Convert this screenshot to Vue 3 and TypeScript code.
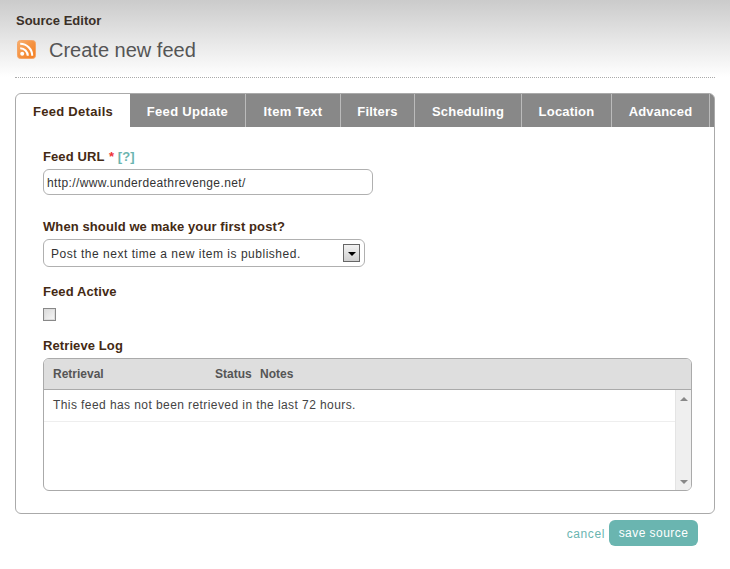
<script setup lang="ts">
interface Tab { label: string; width: number }
const tabs: Tab[] = [
  { label: 'Feed Details', width: 114 },
  { label: 'Feed Update', width: 116 },
  { label: 'Item Text', width: 95 },
  { label: 'Filters', width: 74 },
  { label: 'Scheduling', width: 107 },
  { label: 'Location', width: 90 },
  { label: 'Advanced', width: 98 },
]
</script>

<template>
  <div class="page">
    <header class="head">
      <div class="crumb">Source Editor</div>
      <div class="title-row">
        <svg class="rss" width="19" height="19" viewBox="0 0 19 19" aria-hidden="true">
          <defs>
            <linearGradient id="rssbg" x1="0" y1="0" x2="1" y2="1">
              <stop offset="0" stop-color="#f8b070" />
              <stop offset="0.5" stop-color="#f59240" />
              <stop offset="1" stop-color="#f37f22" />
            </linearGradient>
          </defs>
          <rect x="0.5" y="0.5" width="18" height="18" rx="3" fill="url(#rssbg)" stroke="#f5a566" />
          <circle cx="5.2" cy="13.8" r="2" fill="#fff" />
          <path d="M3.2 8.2a7.6 7.6 0 0 1 7.6 7.6" fill="none" stroke="#fff" stroke-width="2.1" />
          <path d="M3.2 3.8a12 12 0 0 1 12 12" fill="none" stroke="#fff" stroke-width="2.1" />
        </svg>
        <h1 class="title">Create new feed</h1>
      </div>
    </header>
    <div class="rule"></div>

    <section class="panel">
      <nav class="tabs">
        <div
          v-for="(t, i) in tabs"
          :key="t.label"
          class="tab"
          :class="{ active: i === 0 }"
          :style="{ width: t.width + 'px' }"
        >{{ t.label }}</div>
        <div class="tab-rest"></div>
      </nav>
      <div class="body">
        <label class="lbl">Feed URL <span class="req">*</span> <a class="help">[?]</a></label>
        <input class="url" type="text" value="http://www.underdeathrevenge.net/" />

        <label class="lbl gap-l">When should we make your first post?</label>
        <div class="select">
          <span class="sel-text">Post the next time a new item is published.</span>
          <span class="sel-btn"><i class="sel-arrow"></i></span>
        </div>

        <label class="lbl gap-m">Feed Active</label>
        <input class="check" type="checkbox" />

        <label class="lbl gap-m">Retrieve Log</label>
        <div class="log">
          <div class="log-head">
            <span class="c-ret">Retrieval</span>
            <span class="c-stat">Status</span>
            <span>Notes</span>
          </div>
          <div class="log-body">
            <div class="log-rows">
              <div class="log-row">This feed has not been retrieved in the last 72 hours.</div>
            </div>
            <div class="scroll">
              <i class="up"></i>
              <i class="down"></i>
            </div>
          </div>
        </div>
      </div>
    </section>

    <footer class="foot">
      <a class="cancel">cancel</a>
      <button class="save" type="button">save source</button>
    </footer>
  </div>
</template>

<style>
html, body { margin: 0; background: #fff; }
</style>

<style scoped>
.page {
  width: 730px;
  height: 569px;
  overflow: hidden;
  font-family: "Liberation Sans", Arial, sans-serif;
  font-size: 12px;
  color: #333;
  background: #fff;
}
.head {
  height: 77px;
  box-sizing: border-box;
  padding: 13px 16px 0;
  background: linear-gradient(#cbcbcb, #ffffff);
}
.crumb {
  font-size: 13px;
  font-weight: bold;
  line-height: 16px;
  color: #3a3028;
}
.title-row {
  display: flex;
  align-items: center;
  margin-top: 11px;
  padding-left: 1px;
  height: 19px;
}
.rss { flex: none; }
.title {
  margin: 0 0 0 13px;
  font-size: 20px;
  font-weight: normal;
  line-height: 24px;
  color: #555;
}
.rule {
  margin: 0 15px;
  border-top: 1px dotted #aaa;
}
.panel {
  margin: 15px 15px 0;
  height: 421px;
  box-sizing: border-box;
  border: 1px solid #aaa;
  border-radius: 6px;
  overflow: hidden;
}
.tabs {
  display: flex;
  height: 33px;
  background: #888;
}
.tab {
  flex: none;
  box-sizing: border-box;
  height: 33px;
  border-right: 1px solid #bbb;
  text-align: center;
  line-height: 35px;
  font-size: 13px;
  font-weight: bold;
  letter-spacing: 0.2px;
  color: #fff;
  white-space: nowrap;
}
.tab:nth-child(-n+3) { letter-spacing: 0.3px; }
.tab.active {
  background: #fff;
  color: #442a14;
  border-right: 0;
}
.tab-rest { flex: 1; background: #888; }
.body {
  padding: 22px 22px 0 27px;
}
.lbl {
  display: block;
  font-size: 13px;
  font-weight: bold;
  line-height: 16px;
  letter-spacing: 0.1px;
  color: #442a14;
}
.gap-l { margin-top: 24px; }
.gap-m { margin-top: 17px; }
.req { color: #e33; margin-left: 1px; }
.help { color: #6ab5b0; }
.url {
  display: block;
  box-sizing: border-box;
  width: 330px;
  height: 26px;
  margin-top: 4px;
  padding: 1px 3px 0;
  border: 1px solid #b0b0b0;
  border-radius: 6px;
  font-family: inherit;
  font-size: 12px;
  letter-spacing: 0.38px;
  color: #333;
  outline: none;
}
.select {
  display: flex;
  align-items: center;
  justify-content: space-between;
  box-sizing: border-box;
  width: 322px;
  height: 28px;
  margin-top: 4px;
  padding: 0 4px 0 7px;
  border: 1px solid #b0b0b0;
  border-radius: 6px;
  font-size: 12px;
  letter-spacing: 0.52px;
  color: #333;
}
.sel-text { padding-top: 1px; }
.sel-btn {
  display: flex;
  align-items: center;
  justify-content: center;
  box-sizing: border-box;
  width: 17px;
  height: 18px;
  border: 1px solid #666;
  background: linear-gradient(#f2f2f2, #d0d0d0);
}
.sel-arrow {
  display: block;
  width: 0;
  height: 0;
  border-left: 4px solid transparent;
  border-right: 4px solid transparent;
  border-top: 4px solid #000;
  margin-top: 1px;
}
.check {
  display: block;
  appearance: none;
  box-sizing: border-box;
  width: 13px;
  height: 13px;
  margin: 8px 0 0;
  border: 1px solid #888;
  outline: 1px solid #ddd;
  outline-offset: -2px;
  background: linear-gradient(135deg, #d8d8d8, #f8f8f8);
}
.log {
  box-sizing: border-box;
  width: 649px;
  height: 133px;
  margin-top: 4px;
  border: 1px solid #aaa;
  border-radius: 6px;
  overflow: hidden;
}
.log-head {
  display: flex;
  box-sizing: border-box;
  height: 31px;
  padding-left: 9px;
  background: #dedede;
  border-bottom: 1px solid #aaa;
  font-size: 12px;
  font-weight: bold;
  line-height: 31px;
  color: #555;
}
.c-ret { width: 162px; }
.c-stat { width: 45px; }
.log-body {
  display: flex;
  height: 100px;
}
.log-rows { flex: 1; }
.log-row {
  box-sizing: border-box;
  height: 32px;
  padding-left: 9px;
  border-bottom: 1px solid #eee;
  font-size: 12px;
  line-height: 30px;
  letter-spacing: 0.42px;
  color: #444;
}
.scroll {
  display: flex;
  flex-direction: column;
  align-items: center;
  justify-content: space-between;
  box-sizing: border-box;
  width: 16px;
  padding: 7px 0 6px;
  background: #efefef;
  border-left: 1px solid #e4e4e4;
}
.up, .down {
  display: block;
  width: 0;
  height: 0;
  border-left: 4px solid transparent;
  border-right: 4px solid transparent;
}
.up { border-bottom: 4px solid #888; }
.down { border-top: 4px solid #888; }
.foot {
  display: flex;
  justify-content: flex-end;
  align-items: center;
  gap: 4px;
  margin-top: 6px;
  padding-right: 32px;
}
.cancel {
  padding-top: 1px;
  font-size: 12px;
  letter-spacing: 0.6px;
  color: #6ab5b0;
}
.save {
  box-sizing: border-box;
  width: 89px;
  height: 26px;
  padding: 0;
  border: 0;
  border-radius: 6px;
  background: #6ab5b0;
  font-family: inherit;
  font-size: 12px;
  letter-spacing: 0.45px;
  color: #fff;
}
</style>
